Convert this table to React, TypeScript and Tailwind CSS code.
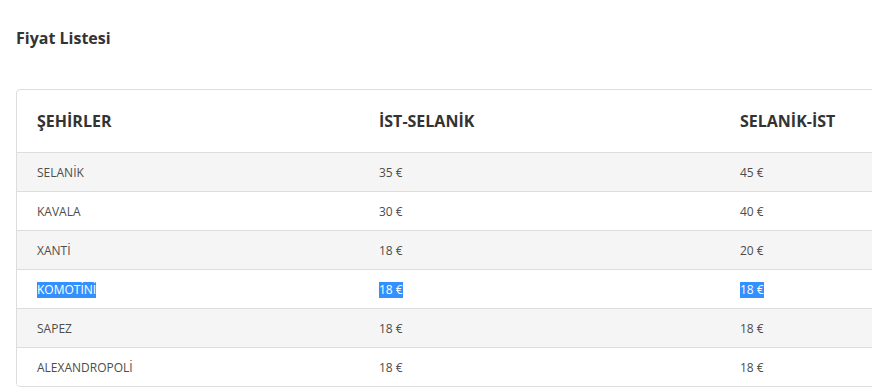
const rows = [
  { city: "SELANİK", go: "35 €", back: "45 €" },
  { city: "KAVALA", go: "30 €", back: "40 €" },
  { city: "XANTİ", go: "18 €", back: "20 €" },
  { city: "KOMOTİNİ", go: "18 €", back: "18 €", selected: true },
  { city: "SAPEZ", go: "18 €", back: "18 €" },
  { city: "ALEXANDROPOLİ", go: "18 €", back: "18 €" },
];

function Cell({ text, selected }: { text: string; selected?: boolean }) {
  return (
    <div className="pl-5 pt-[2px] flex items-center">
      <span className={selected ? "bg-[#3390ff] text-white leading-4" : "leading-4"}>{text}</span>
    </div>
  );
}

function App() {
  return (
    <div className="w-full h-[388px] overflow-hidden bg-white font-['Open_Sans',sans-serif]">
      <h2 className="pl-4 pt-[28px] text-base font-bold text-[#333] leading-5">Fiyat Listesi</h2>
      <div className="ml-4 mt-[41px] w-[1068px] border border-[#ddd] rounded-[4px] overflow-hidden">
        <div className="grid grid-cols-[342px_361px_363px] h-[62px] text-base font-bold text-[#333]">
          <div className="pl-5 flex items-center">ŞEHİRLER</div>
          <div className="pl-5 flex items-center">İST-SELANİK</div>
          <div className="pl-5 flex items-center">SELANİK-İST</div>
        </div>
        {rows.map((r, i) => (
          <div
            key={r.city}
            className={
              "grid grid-cols-[342px_361px_363px] h-[39px] border-t border-[#ddd] text-xs text-[#4d4d4d] " +
              (i % 2 === 0 ? "bg-[#f5f5f5]" : "bg-white")
            }
          >
            <Cell text={r.city} selected={r.selected} />
            <Cell text={r.go} selected={r.selected} />
            <Cell text={r.back} selected={r.selected} />
          </div>
        ))}
      </div>
    </div>
  );
}

export default App;
